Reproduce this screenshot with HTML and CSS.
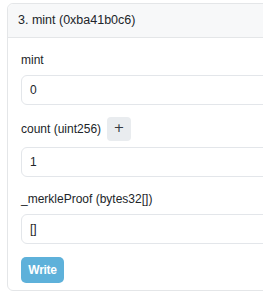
FILE: index.html
```html
<!DOCTYPE html>
<html>
<head>
<meta charset="utf-8">
<link rel="stylesheet" href="styles.css">
</head>
<body>
<div class="card">
  <div class="card-header">3. mint (0xba41b0c6)</div>
  <div class="card-body">
    <div class="field first">
      <label class="label">mint</label>
      <div class="input">0</div>
    </div>
    <div class="field">
      <div class="label-row">
        <label class="label">count (uint256)</label>
        <button class="add-btn">+</button>
      </div>
      <div class="input">1</div>
    </div>
    <div class="field">
      <label class="label">_merkleProof (bytes32[])</label>
      <div class="input">[]</div>
    </div>
    <button class="write-btn">Write</button>
  </div>
</div>
</body>
</html>
```
FILE: styles.css
```css
html, body {
  margin: 0;
  padding: 0;
  overflow: hidden;
  background: #ffffff;
}
body {
  font-family: "Liberation Sans", Arial, sans-serif;
  font-size: 12px;
  color: #212529;
}
.card {
  margin: 3px 0 0 7px;
  width: 330px;
  border: 1px solid #e4e6e8;
  border-radius: 6px;
  background: #fff;
}
.card-header {
  height: 33px;
  line-height: 33px;
  padding: 0 10px;
  background: #f7f8f9;
  border-bottom: 1px solid #e4e6e8;
  border-radius: 6px 6px 0 0;
  font-size: 12.5px;
}
.card-body {
  padding: 12px 13px 7px 13px;
}
.field {
  margin-top: 12px;
}
.field.first {
  margin-top: 0;
}
.label {
  display: block;
  line-height: 20px;
  margin-bottom: 5px;
}
.label-row {
  display: flex;
  align-items: center;
  gap: 6px;
  height: 24px;
  margin-bottom: 6px;
}
.label-row .label {
  margin-bottom: 0;
}
.add-btn {
  width: 24px;
  height: 24px;
  border: none;
  border-radius: 4px;
  background: #e9ecef;
  color: #343a40;
  font-family: "DejaVu Sans", sans-serif;
  font-size: 13px;
  line-height: 20px;
  padding: 0 0 2px 0;
}
.input {
  height: 28px;
  line-height: 28px;
  border: 1px solid #e3e6ea;
  border-radius: 6px;
  padding: 0 8px;
  background: #fff;
}
.write-btn {
  margin-top: 13px;
  width: 43px;
  height: 26px;
  border: none;
  border-radius: 5px;
  background: #5eb1da;
  color: #fff;
  font-family: "Liberation Sans", Arial, sans-serif;
  font-weight: bold;
  font-size: 12px;
  letter-spacing: -0.3px;
  padding: 0;
  display: block;
}
```
